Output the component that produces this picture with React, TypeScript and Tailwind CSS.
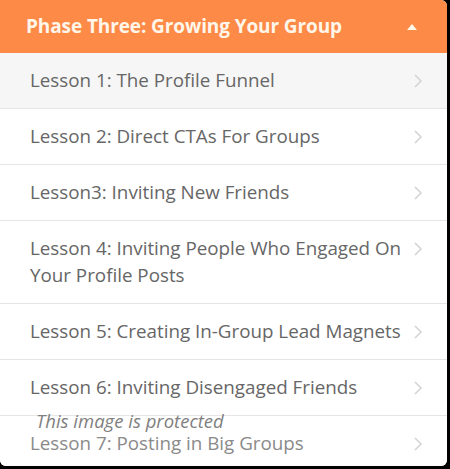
import React from 'react';

const lessons = [
  'Lesson 1: The Profile Funnel',
  'Lesson 2: Direct CTAs For Groups',
  'Lesson3: Inviting New Friends',
  'Lesson 4: Inviting People Who Engaged On Your Profile Posts',
  'Lesson 5: Creating In-Group Lead Magnets',
  'Lesson 6: Inviting Disengaged Friends',
  'Lesson 7: Posting in Big Groups',
];

const Chevron = () => (
  <svg width="10" height="16" viewBox="0 0 10 16" className="flex-shrink-0 mt-[6px]">
    <path d="M2 2 L8 8 L2 14" fill="none" stroke="#d4d4d4" strokeWidth="1.6" />
  </svg>
);

export default function App() {
  return (
    <div className="w-[450px] h-[469px] bg-black overflow-hidden" style={{ fontFamily: '"Open Sans", sans-serif' }}>
      <div className="relative w-[447px] h-[466px] bg-white rounded-b-md rounded-tr-md overflow-hidden">
        {/* Header */}
        <div className="h-[53px] bg-[#fd8b47] flex items-center justify-between pl-[26px] pr-[30px] shadow-[0_1px_2px_rgba(0,0,0,0.15)]">
          <span className="text-[19px] font-bold text-[#fff6ea] tracking-[-0.1px]">Phase Three: Growing Your Group</span>
          <svg width="10" height="6" viewBox="0 0 10 6">
            <path d="M0 6 L5 0 L10 6 Z" fill="#fff6ea" />
          </svg>
        </div>

        {/* Lessons */}
        <div className="flex flex-col">
          {lessons.map((title, i) => (
            <div
              key={title}
              className={`flex items-start justify-between gap-1 pl-[30px] pr-[24px] py-[14px] border-b border-[#e6e6e6] ${
                i === 0 ? 'bg-[#f6f6f6]' : 'bg-white'
              }`}
            >
              <span
                className={`text-[18.8px] leading-[27px] ${i === 6 ? 'text-[#8a8a8a]' : 'text-[#666666]'}`}
              >
                {title}
              </span>
              <Chevron />
            </div>
          ))}
        </div>

        {/* watermark overlay */}
        <span className="absolute left-[36px] top-[407px] text-[18.5px] italic text-[#808080]">
          This image is protected
        </span>
      </div>
    </div>
  );
}
